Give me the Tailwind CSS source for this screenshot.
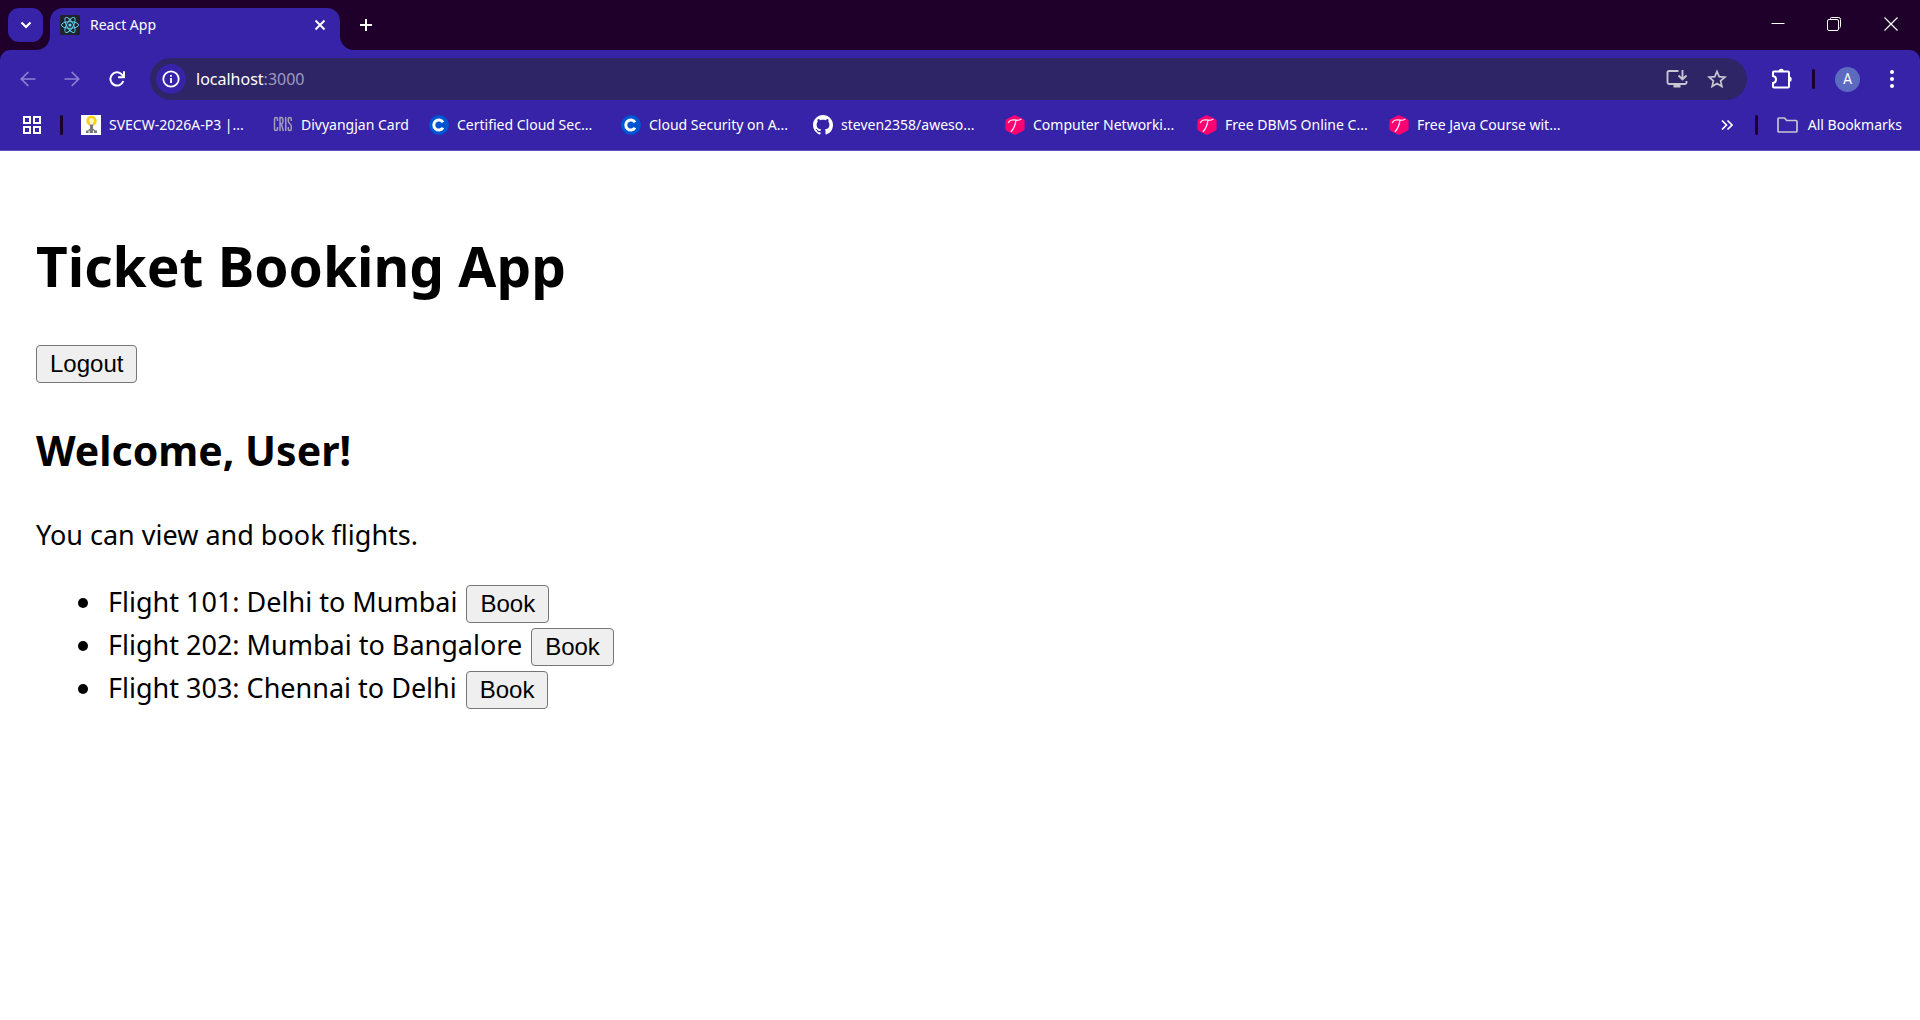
<!DOCTYPE html>
<html lang="en">
<head>
<meta charset="utf-8">
<title>React App</title>
<script src="https://cdn.jsdelivr.net/npm/@tailwindcss/browser@4"></script>
</head>
<body class="min-h-screen bg-white font-['Noto_Sans','Open_Sans',sans-serif] text-black">
<svg class="hidden" aria-hidden="true">
  <symbol id="coursera" viewBox="0 0 20 20"><circle cx="10" cy="10" r="10" fill="#0056d2"/><path d="M14 7.3A5 5 0 1 0 14 12.7" fill="none" stroke="#fff" stroke-width="3"/></symbol>
  <symbol id="hex" viewBox="0 0 20 20"><path d="M8.800.5q1.200-.7 2.400 0l7.200 3.800q1.200.7 1.200 2v7.400q0 1.300-1.200 2l-7.200 3.800q-1.200.7-2.400 0l-7.200-3.800q-1.200-.7-1.200-2V6.300q0-1.300 1.200-2z" fill="#ff0073"/><path d="M3.500 7.500C5 4.300 7.500 4.600 10 5s4 .6 6-.8M11 5.200C10.500 9 9.500 13 6.200 16.500" fill="none" stroke="#ffd9ea" stroke-width="1.400" stroke-linecap="round"/></symbol>
</svg>

<header class="text-sm text-white">
  <!-- Tab strip -->
  <div class="flex h-[50px] items-stretch bg-[#1e002a]">
    <button aria-label="Search tabs" class="mt-2 ml-2 flex h-[34px] w-[35px] items-center justify-center rounded-[11px] bg-[#3623a8]">
      <svg width="12" height="8" viewBox="0 0 12 8" fill="none" stroke="#fff" stroke-width="2.200"><path d="M1.500 1.500 6 6l4.500-4.500"/></svg>
    </button>
    <div class="relative mt-2 ml-[7px] flex w-[290px] items-center rounded-t-[13px] bg-[#3623a8] pr-3 pl-[10px]">
      <svg class="absolute bottom-0 -left-[14px]" width="14" height="14"><path d="M14 0v14H0A14 14 0 0 0 14 0z" fill="#3623a8"/></svg>
      <svg class="absolute -right-[14px] bottom-0" width="14" height="14"><path d="M0 0v14h14A14 14 0 0 1 0 0z" fill="#3623a8"/></svg>
      <div class="flex h-[34px] flex-1 items-center self-start">
        <svg width="20" height="20" viewBox="0 0 20 20" fill="none" stroke="#61dafb" stroke-width=".9"><rect width="20" height="20" rx="1.500" fill="#20232a" stroke="none"/><ellipse cx="10" cy="10" rx="8.600" ry="3.300"/><ellipse cx="10" cy="10" rx="8.600" ry="3.300" transform="rotate(60 10 10)"/><ellipse cx="10" cy="10" rx="8.600" ry="3.300" transform="rotate(120 10 10)"/><circle cx="10" cy="10" r="1.600" fill="#61dafb" stroke="none"/></svg>
        <span class="ml-[10px] flex-1">React App</span>
        <button aria-label="Close tab" class="flex size-4 items-center justify-center"><svg width="12" height="12" viewBox="0 0 12 12" stroke="#fff" stroke-width="1.900"><path d="m1.500 1.500 9 9m0-9-9 9"/></svg></button>
      </div>
    </div>
    <button aria-label="New tab" class="ml-4 flex h-10 w-5 items-center justify-center self-start pt-2.5"><svg width="14" height="14" viewBox="0 0 14 14" stroke="#fff" stroke-width="2"><path d="M7 1v12M1 7h12"/></svg></button>
    <div class="ml-auto flex h-12 items-center">
      <button aria-label="Minimize" class="flex h-full w-14 items-center justify-center"><svg width="14" height="14" stroke="#fff"><path d="M.5 6.500h13"/></svg></button>
      <button aria-label="Restore" class="flex h-full w-14 items-center justify-center"><svg width="14" height="14" fill="none" stroke="#fff"><rect x=".5" y="2.500" width="11" height="11" rx="1.500"/><path d="M3.500 2V1.500q0-1 1-1h7q2 0 2 2v7q0 1-1 1.500"/></svg></button>
      <button aria-label="Close" class="flex h-full w-[58px] items-center justify-center"><svg width="14" height="14" stroke="#fff" stroke-width="1.200"><path d="m.5.5 13 13M13.500.5l-13 13"/></svg></button>
    </div>
  </div>

  <div class="bg-[#1e002a]">
  <div class="rounded-t-[10px] border-b border-[#5f50bb] bg-[#3623a8]">
    <!-- Navigation row -->
    <div class="flex h-[58px] items-center pl-[18px]">
      <button aria-label="Back" class="flex size-5 items-center justify-center"><svg width="16" height="16" viewBox="0 0 16 16" fill="none" stroke="#8d82d2" stroke-width="1.700"><path d="M15.500 8H1.500M8.300 1 1.300 8l7 7"/></svg></button>
      <button aria-label="Forward" class="ml-6 flex size-5 items-center justify-center"><svg width="16" height="16" viewBox="0 0 16 16" fill="none" stroke="#8d82d2" stroke-width="1.700"><path d="M.5 8h14M7.700 1l7 7-7 7"/></svg></button>
      <button aria-label="Reload" class="ml-[25px] flex size-5 items-center justify-center"><svg width="16" height="16" viewBox="0 0 16 16" fill="none" stroke="#fff" stroke-width="2"><path d="M14.300 10A6.600 6.600 0 1 1 13 3.600L15 5.800M15 .3v6H9"/></svg></button>
      <div class="ml-[23px] flex h-[42px] flex-1 items-center rounded-full bg-[#2e2566] pr-5 pl-[6px]">
        <button aria-label="Site information" class="flex size-[30px] items-center justify-center rounded-full bg-[#3623a8]"><svg width="18" height="18" viewBox="0 0 18 18" fill="none" stroke="#fff" stroke-width="1.800"><circle cx="9" cy="9" r="7.700"/><path d="M9 8v5M9 5v1.800"/></svg></button>
        <a href="http://localhost:3000" class="ml-[10px] flex-1 text-base text-white">localhost<span class="text-[#a09bc0]">:3000</span></a>
        <button aria-label="Install app" class="flex size-[22px] items-center justify-center"><svg width="22" height="20" viewBox="0 0 22 20" fill="none" stroke="#c7c5cf" stroke-width="1.900"><path d="M12.500 2H3q-1.500 0-1.500 1.500v10Q1.500 15 3 15h16q1.500 0 1.500-1.500V12M16.500 1v9M12.500 6.500l4 4 4-4"/><path d="M7.500 15h7v3.500h-7z" fill="#c7c5cf" stroke="none"/></svg></button>
        <button aria-label="Bookmark this tab" class="ml-[19px] flex size-5 items-center justify-center"><svg width="20" height="20" viewBox="0 0 20 20" fill="none" stroke="#c7c5cf" stroke-width="1.700"><path d="m10 2.500 2.200 5.200 5.700.5-4.300 3.700 1.300 5.600-4.900-3-4.900 3 1.300-5.600-4.300-3.700 5.700-.5z"/></svg></button>
      </div>
      <button aria-label="Extensions" class="ml-6 flex size-[22px] items-center justify-center"><svg width="22" height="22" viewBox="0 0 22 22" fill="none" stroke="#fff" stroke-width="2"><path d="M3 3.500h14q1 0 1 1v14q0 1-1 1H3q-1 0-1-1v-3.500c4-.5 4-6.500 0-7V4.500q0-1 1-1z"/><path d="M7.500 3.500a2.700 2.700 0 0 1 5.400 0zM18 8.500a2.700 2.700 0 0 1 0 5.400z" fill="#fff" stroke="none"/></svg></button>
      <span class="ml-[19px] h-5 w-[3px] rounded-sm bg-[#1e002a]"></span>
      <button aria-label="Profile" class="ml-5 flex size-[25px] items-center justify-center rounded-full bg-[#5c6bc0] font-['Roboto',sans-serif] text-sm">A</button>
      <button aria-label="Menu" class="mr-[18px] ml-[22px] flex size-5 items-center justify-center"><svg width="4" height="18" fill="#fff"><circle cx="2" cy="2" r="2"/><circle cx="2" cy="9" r="2"/><circle cx="2" cy="16" r="2"/></svg></button>
    </div>

    <!-- Bookmarks bar -->
    <nav class="flex h-[42px] items-center pb-2 pl-[23px] whitespace-nowrap">
      <button aria-label="Apps" class="flex w-[18px]"><svg width="18" height="18" fill="none" stroke="#fff" stroke-width="2"><path d="M1 1h6v6H1zM11 1h6v6h-6zM1 11h6v6H1zM11 11h6v6h-6z"/></svg></button>
      <span class="ml-[19px] h-5 w-[3px] rounded-sm bg-[#1e002a]"></span>
      <div class="ml-[18px] flex min-w-0 flex-1">
        <a href="#" class="flex w-48 items-center gap-2"><svg width="20" height="20" viewBox="0 0 20 20"><path fill="#fff" d="M0 0h20v20H0z"/><path d="M10.500.8a5 5 0 0 0-3.500 8.700l1.500 1.500h4l1.500-1.500A5 5 0 0 0 10.500.8z" fill="#fbd116"/><path d="M10.500 3a2.500 2.500 0 0 0-1.500 4.500V12h3V7.500A2.500 2.500 0 0 0 10.500 3z" fill="#fff6d0"/><path d="M9 9.500h3v4l2.500 2H6.500l2.500-2zM5 15.500h2.500V18H5zM8.500 15.500h3.500V18H8.500zM13 15.500h3V18h-3z" fill="#77777c"/></svg>SVECW-2026A-P3 |...</a>
        <a href="#" class="flex w-[156px] items-center gap-2"><svg width="20" height="20" viewBox="0 0 20 20" fill="none" stroke="#a39db6" stroke-width="1.500"><path d="M4.500 6V4q0-1.500-1.500-1.500T1.500 4v10q0 1.500 1.500 1.500T4.500 14v-2M7 16V2.500h1.200Q10 2.500 10 5.500T8.200 9H7m1.500 0L10.300 16M12.700 2v14M18.300 6V4q0-1.500-1.500-1.500T15.300 4v2c0 3 3 2.500 3 5.500V14q0 1.500-1.500 1.500T15.300 14v-2"/></svg>Divyangjan Card</a>
        <a href="#" class="flex w-48 items-center gap-2"><svg width="20" height="20"><use href="#coursera"/></svg>Certified Cloud Sec...</a>
        <a href="#" class="flex w-48 items-center gap-2"><svg width="20" height="20"><use href="#coursera"/></svg>Cloud Security on A...</a>
        <a href="#" class="flex w-48 items-center gap-2"><svg width="20" height="20" viewBox="0 0 16 16" fill="#fff"><path d="M8 0C3.580 0 0 3.580 0 8c0 3.540 2.290 6.530 5.470 7.590.4.070.55-.17.55-.38 0-.19-.01-.82-.01-1.490-2.010.37-2.530-.49-2.690-.94-.09-.23-.48-.94-.82-1.130-.28-.15-.68-.52-.01-.53.63-.01 1.080.58 1.230.82.72 1.210 1.870.87 2.330.66.070-.52.280-.87.510-1.070-1.780-.2-3.640-.89-3.640-3.950 0-.87.310-1.590.820-2.150-.08-.2-.36-1.020.080-2.120 0 0 .67-.21 2.200.82.640-.18 1.320-.27 2-.27s1.360.09 2 .27c1.530-1.040 2.200-.82 2.200-.82.440 1.100.160 1.920.080 2.120.510.560.820 1.270.820 2.150 0 3.070-1.870 3.750-3.650 3.950.290.250.540.730.540 1.480 0 1.070-.01 1.930-.01 2.200 0 .21.150.46.550.38A8.010 8.010 0 0 0 16 8c0-4.420-3.580-8-8-8z"/></svg>steven2358/aweso...</a>
        <a href="#" class="flex w-48 items-center gap-2"><svg width="20" height="20"><use href="#hex"/></svg>Computer Networki...</a>
        <a href="#" class="flex w-48 items-center gap-2"><svg width="20" height="20"><use href="#hex"/></svg>Free DBMS Online C...</a>
        <a href="#" class="flex w-48 items-center gap-2"><svg width="20" height="20"><use href="#hex"/></svg>Free Java Course wit...</a>
      </div>
      <button aria-label="More bookmarks" class="mr-[22px]"><svg width="12" height="12" viewBox="0 0 12 12" fill="none" stroke="#fff" stroke-width="1.700"><path d="m1 1.500 4.500 4.500L1 10.500M6.500 1.500 11 6l-4.500 4.500"/></svg></button>
      <span class="h-5 w-[3px] rounded-sm bg-[#1e002a]"></span>
      <a href="#" class="mr-[18px] ml-[19px] flex items-center gap-[10px]"><svg width="21" height="16" viewBox="0 0 21 16" fill="none" stroke="#c7c5cf" stroke-width="1.700"><path d="M2 1h5.500l2.200 2.500H19q1 0 1 1V14q0 1-1 1H2q-1 0-1-1V2q0-1 1-1z"/></svg>All Bookmarks</a>
    </nav>
  </div>
  </div>
</header>

<main class="px-9 pt-[77px] pb-9">
  <h1 class="text-[55px] leading-[76px] font-bold">Ticket Booking App</h1>
  <button class="mt-[41px] block h-[38px] rounded-[4px] border border-[#767676] bg-[#efefef] px-[13px] font-['Liberation_Sans',Arial,sans-serif] text-2xl leading-none">Logout</button>
  <h2 class="mt-[39px] text-[41px] leading-[56px] font-bold">Welcome, User!</h2>
  <p class="mt-[38px] text-[27px] leading-[38px]">You can view and book flights.</p>
  <ul class="mt-[26px] list-disc pl-[68px] text-[27px] leading-[43px]">
    <li class="pl-1">Flight 101: Delhi to Mumbai <button class="ml-0.5 h-[38px] rounded-[4px] border border-[#767676] bg-[#efefef] px-[13px] font-['Liberation_Sans',Arial,sans-serif] text-2xl leading-none">Book</button></li>
    <li class="pl-1">Flight 202: Mumbai to Bangalore <button class="ml-0.5 h-[38px] rounded-[4px] border border-[#767676] bg-[#efefef] px-[13px] font-['Liberation_Sans',Arial,sans-serif] text-2xl leading-none">Book</button></li>
    <li class="pl-1">Flight 303: Chennai to Delhi <button class="ml-0.5 h-[38px] rounded-[4px] border border-[#767676] bg-[#efefef] px-[13px] font-['Liberation_Sans',Arial,sans-serif] text-2xl leading-none">Book</button></li>
  </ul>
</main>
</body>
</html>
